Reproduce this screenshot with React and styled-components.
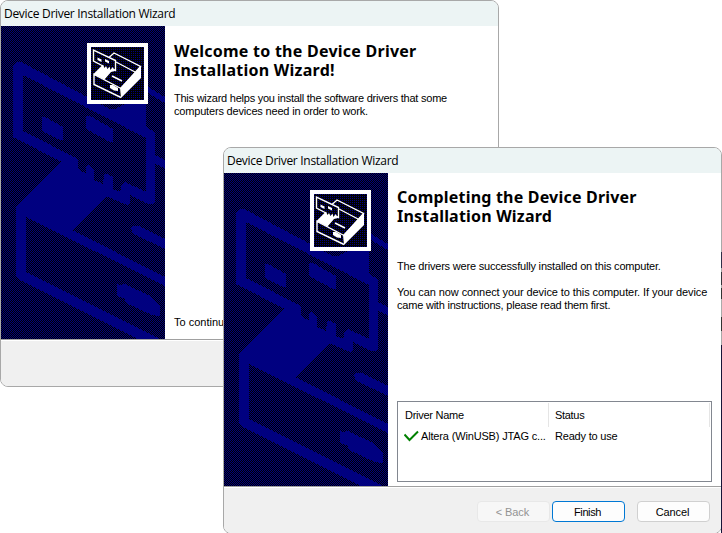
import React from 'react';
import styled, { createGlobalStyle } from 'styled-components';

const Global = createGlobalStyle`
  * { box-sizing: border-box; }
  body { margin: 0; background: #fff; color: #000; overflow: hidden; }
`;

const Desktop = styled.main`
  position: relative;
  width: 722px;
  height: 533px;
  overflow: hidden;
`;

const Window = styled.section`
  position: absolute;
  left: ${(p) => p.$x}px;
  top: ${(p) => p.$y}px;
  width: 499px;
  height: 387px;
  display: flex;
  flex-direction: column;
  border: 1px solid #a8a8a8;
  border-radius: 8px;
  background: #fff;
  overflow: hidden;
  font: 11px/13px 'Liberation Sans', Arial, sans-serif;
`;

const TitleBar = styled.header`
  flex: 0 0 25px;
  height: 25px;
  padding-left: 3px;
  background: #ecf4f4;
  font: 12px/25px 'Open Sans', 'Noto Sans', sans-serif;
  letter-spacing: -0.3px;
  white-space: nowrap;
`;

const Body = styled.div`
  flex: 0 0 313px;
  display: flex;
`;

const Banner = styled.svg`
  display: block;
  flex: 0 0 164px;
  width: 164px;
  height: 313px;
`;

const Content = styled.div`
  flex: 1;
  display: flex;
  flex-direction: column;
  padding: ${(p) => p.$top}px 8px 3px 9px;
`;

const Heading = styled.h1`
  margin: 0;
  font: bold 16px/19px 'Noto Sans', sans-serif;
  letter-spacing: ${(p) => p.$track}px;
  white-space: nowrap;
`;

const Text = styled.p`
  margin: ${(p) => p.$top || 0}px 0 0;
  letter-spacing: ${(p) => p.$track || 0}px;
  white-space: nowrap;
`;

const Hint = styled(Text)`
  margin-top: auto;
  margin-bottom: 7px;
`;

const DriverTable = styled.div`
  margin-top: 89px;
  width: 315px;
  height: 81px;
  border: 1px solid #828790;
  padding: 1px;
`;

const Row = styled.div`
  display: grid;
  grid-template-columns: 150px 161px;
  height: ${(p) => (p.$head ? 24 : 18)}px;
  line-height: ${(p) => (p.$head ? 24 : 18)}px;
  white-space: nowrap;
`;

const Cell = styled.div`
  display: flex;
  align-items: center;
  padding-left: 6px;
  letter-spacing: ${(p) => p.$track || 0}px;
  border-right: 1px solid ${(p) => (p.$head ? '#e5e5e5' : 'transparent')};
`;

const Check = styled.svg`
  flex: none;
  width: 15px;
  height: 12px;
  margin: 0 2px 0 -1px;
`;

const Footer = styled.footer`
  flex: 1;
  display: flex;
  justify-content: flex-end;
  padding: 14px 11px 0 0;
  border-top: 1px solid #a0a0a0;
  box-shadow: inset 0 1px #fff;
  background: #f0f0f0;
`;

const Button = styled.button`
  width: 73px;
  height: 21px;
  margin-left: ${(p) => p.$gap || 0}px;
  padding: 1px 2px 0 0;
  border: 1px solid ${(p) => (p.$primary ? '#0078d4' : p.disabled ? '#e8e8e8' : '#d0d0d0')};
  border-radius: 4px;
  background: ${(p) => (p.disabled ? '#f7f7f7' : '#fdfdfd')};
  color: ${(p) => (p.disabled ? '#939393' : '#000')};
  font: inherit;
  letter-spacing: ${(p) => p.$track || 0}px;
`;

const ScreenEdge = styled.div`
  position: absolute;
  left: 721px;
  top: 225px;
  width: 1px;
  height: 308px;
  background: linear-gradient(#a8a8a8 0 27px, #302f48 27px 43px, #a8a8a8 43px 47px, #35343c 47px 60px, #aaa 60px 63px, #333 63px 74px, #aaa 74px 92px, #333 92px 106px, #a8a8a8 106px 120px, #171538 120px);
`;

const NAVY = '#000080';

function DriverIcon({ fill }) {
  return (
    <g>
      <rect x="87" y="43" width="61" height="61" fill="#fff" />
      <rect x="91" y="47" width="53" height="53" fill="#000" />
      <rect x="91" y="47" width="53" height="53" fill={fill} />
      <g fill="none" stroke="#fff" strokeWidth="1.4">
        <path d="M109 57.5L114 53L140.5 66.5L121 88.5L94 74.5V84.5L121 97.5" />
        <path d="M116 62L135 72" />
        <path d="M112 76L122 81" strokeWidth="1.6" />
        <path d="M103 66L93.5 61V50L115.5 60.5V70.500L112 69" />
      </g>
      <g fill="#fff">
        <path d="M120 88L141 66V78L121 98Z" />
        <path d="M93.5 74L101.5 66L103 64.5L104.5 68L106 66L107.5 69L109.5 66.5L110.5 70L112.5 67L115 71L111 72L104.5 79.5Z" />
        <path d="M110 85L113 85L118 88V91L114 90.5L110 88Z" />
        <path d="M97.5 57.5L101.5 59.5V62L97.5 60ZM105 59L109 61V63.5L105 61.5Z" />
      </g>
    </g>
  );
}

function WizardBanner({ id }) {
  return (
    <Banner viewBox="1 26 164 313">
      <defs>
        <pattern id={`${id}-checker`} width="2" height="2" patternUnits="userSpaceOnUse">
          <path d="M0 0h1v1h-1zM1 1h1v1h-1z" fill={NAVY} shapeRendering="crispEdges" />
        </pattern>
        <pattern id={`${id}-dots`} width="2" height="2" patternUnits="userSpaceOnUse">
          <path d="M1 1h1v1h-1z" fill={NAVY} shapeRendering="crispEdges" />
        </pattern>
      </defs>
      <rect x="1" y="26" width="164" height="313" fill="#000" />
      <rect x="1" y="26" width="164" height="313" fill={`url(#${id}-checker)`} />
      <g fill={NAVY} shapeRendering="crispEdges">
        <path
          fillRule="evenodd"
          d="M13 66L17 62H21L110 109H115L125 104V95H146V127L155 132V203L153 204H148L130 195V203L127 205L106 196L72 230L165 277V286L26 217V272L160 339H138L22 281L16 276V207L62 162L13 137Z
             M23 75V131L78 159V169L86 174V166L88 165L94 169V180L103 184L104 174L107 174L113 177V189L120 192L122 184L125 182L146 192V138Z"
        />
        <path d="M42 117H45L63 127V140H60L42 131Z" />
        <path d="M86 116H90L113 129V142H110L86 129Z" />
        <path d="M148 87L165 97V103L148 93Z" />
        <path d="M155 155L165 160V168L155 164Z" />
        <path d="M131 229L133 226H139L165 239V249L134 234Z" />
        <path d="M117 284L121 285L125 284L150 296L152 299L160 305V316L152 315L126 303L125 299L117 296Z" />
      </g>
      <DriverIcon fill={`url(#${id}-dots)`} />
    </Banner>
  );
}

export default function App() {
  return (
    <>
      <Global />
      <Desktop>
        <Window $x={0} $y={0}>
          <TitleBar>Device Driver Installation Wizard</TitleBar>
          <Body>
            <WizardBanner id="welcome" />
            <Content $top={16}>
              <Heading $track={0.25}>Welcome to the Device Driver<br />Installation Wizard!</Heading>
              <Text $top={12} $track={-0.24}>This wizard helps you install the software drivers that some</Text>
              <Text $track={-0.18}>computers devices need in order to work.</Text>
              <Hint>To continue, click Next.</Hint>
            </Content>
          </Body>
          <Footer />
        </Window>
        <Window $x={223} $y={147}>
          <TitleBar>Device Driver Installation Wizard</TitleBar>
          <Body>
            <WizardBanner id="complete" />
            <Content $top={15}>
              <Heading $track={0.2}>Completing the Device Driver<br />Installation Wizard</Heading>
              <Text $top={34} $track={-0.19}>The drivers were successfully installed on this computer.</Text>
              <Text $top={13} $track={-0.085}>You can now connect your device to this computer. If your device</Text>
              <Text $track={-0.21}>came with instructions, please read them first.</Text>
              <DriverTable>
                <Row $head>
                  <Cell $head $track={-0.27}>Driver Name</Cell>
                  <Cell $head $track={-0.3}>Status</Cell>
                </Row>
                <Row>
                  <Cell $track={-0.16}>
                    <Check viewBox="0 0 15 12">
                      <path d="M0.5 4.5L5.5 10L14 1.5" fill="none" stroke="#008000" strokeWidth="2" />
                    </Check>
                    Altera (WinUSB) JTAG c...
                  </Cell>
                  <Cell $track={-0.2}>Ready to use</Cell>
                </Row>
              </DriverTable>
            </Content>
          </Body>
          <Footer>
            <Button disabled $track={-0.1}>&lt; Back</Button>
            <Button $primary $gap={2} $track={-0.4}>Finish</Button>
            <Button $gap={12} $track={-0.15}>Cancel</Button>
          </Footer>
        </Window>
        <ScreenEdge />
      </Desktop>
    </>
  );
}
